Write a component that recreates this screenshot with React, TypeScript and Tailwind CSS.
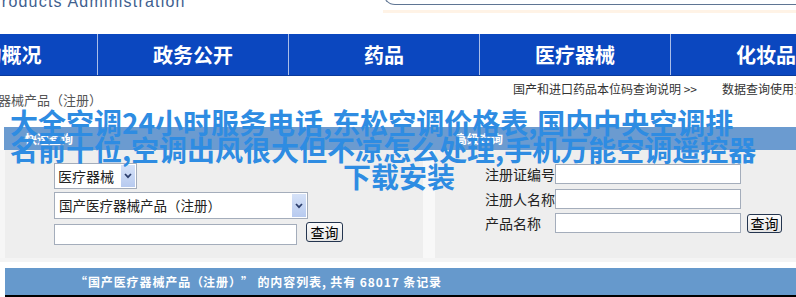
import type { ReactNode } from "react";

const navItems = ["机构概况", "政务公开", "药品", "医疗器械", "化妆品"];

// full-width parens rendered in a full em cell, as the old page shows them
function Reg() {
  return (
    <>
      <span className="inline-block w-[1em] text-center">（</span>注册<span className="inline-block w-[1em] text-center">）</span>
    </>
  );
}

function Arrow() {
  return (
    <div className="m-[1px] ml-auto flex w-[14px] items-center justify-center bg-gradient-to-b from-[#d6e2f8] to-[#b7caef]">
      <svg width="8" height="6" viewBox="0 0 8 6">
        <path d="M1 1 L4 4.2 L7 1" fill="none" stroke="#2b3d6b" strokeWidth="1.7" />
      </svg>
    </div>
  );
}

function Field({ label, children }: { label: string; children?: ReactNode }) {
  return (
    <div className="flex h-[20px] items-center">
      <span className="w-[70px] text-[14px] leading-[20px] text-[#222]">{label}</span>
      <div className="h-[20px] w-[186px] border border-[#a4adbb] bg-white" />
      {children}
    </div>
  );
}

function QueryButton({ className }: { className: string }) {
  return (
    <button className={`flex items-center justify-center rounded-[3px] border border-[#24354f] bg-gradient-to-b from-[#fbfbfb] to-[#e4e4e4] text-[14px] leading-none text-black ${className}`}>
      查询
    </button>
  );
}

export default function App() {
  return (
    <div className="relative h-[297px] w-[796px] overflow-hidden bg-white font-['Noto_Sans_CJK_SC','Noto_Sans',sans-serif]">
      {/* header */}
      <header className="flex h-[34px] items-start">
        <div className="-ml-[10px] -mt-[6px] w-[393px] whitespace-nowrap font-['Liberation_Sans',Arial,sans-serif] text-[16px] leading-[16px] tracking-[1.2px] text-[#3f5f8f]">
          Products Administration
        </div>
        <div className="flex flex-1 flex-col">
          <div className="-mt-[20px] h-[25px] rounded-bl-[12px] border border-r-0 border-[#5f7593]" />
          <div className="mt-[5px] h-[3px] bg-[#fff3e6]" />
        </div>
      </header>

      {/* nav */}
      <nav className="h-[42px] border-b border-[#0a3a9c] bg-[#0b47bf]">
        <div className="-ml-[94px] flex h-full w-[955px]">
          {navItems.map((t, i) => (
            <div
              key={t}
              className={`flex w-[191px] items-center justify-center text-[20px] font-bold text-white ${i > 0 ? "border-l border-[#a9bde8]" : ""}`}
            >
              {t}
            </div>
          ))}
        </div>
      </nav>

      {/* breadcrumb + links */}
      <div className="flex h-[51px] items-start">
        <div className="w-[513px] shrink-0">
          <div className="-ml-[54px] mt-[15px] whitespace-nowrap text-[13px] leading-[17px] text-[#555]">
            国产医疗器械产品<Reg />
          </div>
        </div>
        <div className="mt-[5px] flex whitespace-nowrap text-[12px] leading-[16px] text-[#333]">
          <span>国产和进口药品本位码查询说明 &gt;&gt;</span>
          <span className="ml-[25px]">数据查询使用说明</span>
        </div>
      </div>

      {/* tab bar */}
      <div className="ml-[4px] flex h-[23px] items-center bg-[#6b9bd0] text-[12px] font-bold text-white">
        <span className="w-[451px] pl-[21px]">快速查询</span>
        <span>高级查询</span>
      </div>

      {/* form */}
      <div className="flex h-[108px] bg-[#f6f6f6]">
        <div className="ml-[5px] flex w-[418px] flex-col bg-[#eeeeee] pl-[49px] pt-[13px]">
          <div className="flex h-[26px] w-[83px] border border-[#a4adbb] bg-white">
            <span className="pl-[3px] text-[14px] leading-[24px] text-[#222]">医疗器械</span>
            <Arrow />
          </div>
          <div className="mt-[3px] flex h-[27px] w-[254px] border border-[#a4adbb] bg-white">
            <span className="whitespace-nowrap pl-[4px] text-[13.5px] leading-[25px] text-[#222]">
              国产医疗器械产品<Reg />
            </span>
            <Arrow />
          </div>
          <div className="mt-[5px] flex items-start">
            <div className="h-[21px] w-[243px] border border-[#a4adbb] bg-white" />
            <QueryButton className="-mt-[2px] ml-[9px] h-[20px] w-[37px]" />
          </div>
        </div>
        <div className="w-[12px] bg-[#f8f8f8]" />
        <div className="flex flex-1 flex-col gap-[4.5px] bg-[#eeeeee] pl-[50px] pt-[14px]">
          <Field label="注册证编号" />
          <Field label="注册人名称" />
          <Field label="产品名称">
            <QueryButton className="ml-[6px] h-[19px] w-[35px]" />
          </Field>
        </div>
      </div>

      <div className="h-[10px] border-t-[4px] border-[#f4f4f4]" />

      {/* result bar */}
      <div className="ml-[5px] flex h-[27px] items-center whitespace-nowrap bg-[#6699cc] pl-[70px] text-[12px] font-bold tracking-[0.9px] text-white">
        “国产医疗器械产品<Reg />” 的内容列表, 共有 68017 条记录
      </div>
      <div className="ml-[5px] h-[2px] bg-black" />

      {/* overlay headline */}
      <div className="absolute left-[10px] top-[109px] z-10 whitespace-nowrap text-[28px] font-bold leading-[27px] text-[#2e8ce2]">
        <div>大全空调24小时服务电话,东松空调价格表,国内中央空调排</div>
        <div>名前十位,空调出风很大但不凉怎么处理,手机万能空调遥控器</div>
        <div className="pl-[333px]">下载安装</div>
      </div>
    </div>
  );
}
